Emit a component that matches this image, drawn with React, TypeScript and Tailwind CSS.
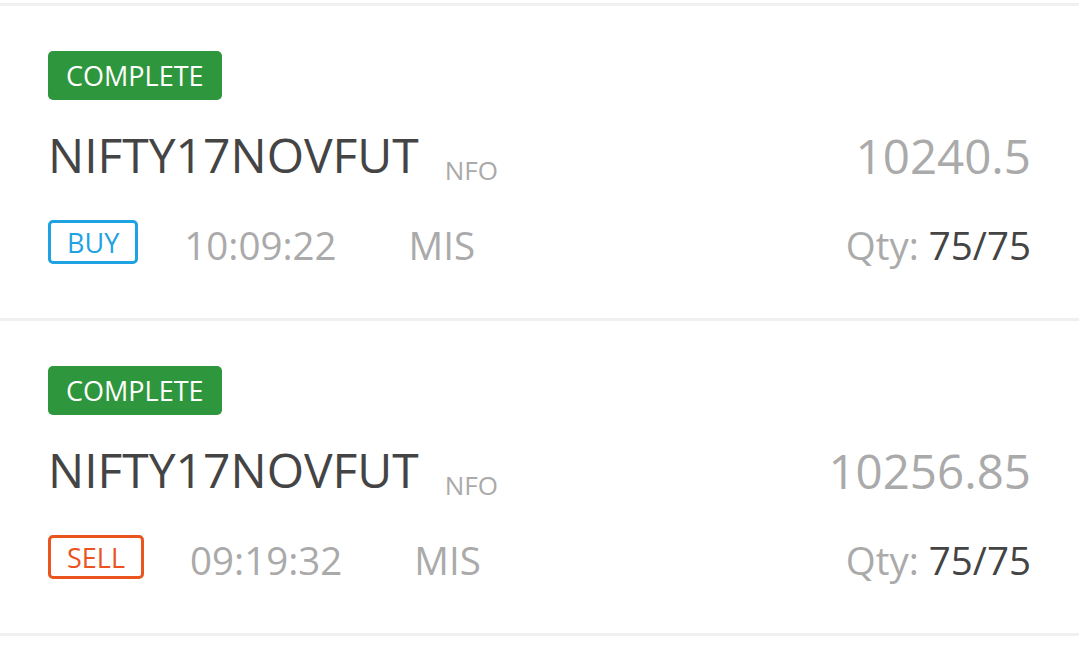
type Order = {
  id: number;
  symbol: string;
  exchange: string;
  price: string;
  side: "BUY" | "SELL";
  time: string;
  product: string;
  qty: string;
};

const orders: Order[] = [
  {
    id: 1,
    symbol: "NIFTY17NOVFUT",
    exchange: "NFO",
    price: "10240.5",
    side: "BUY",
    time: "10:09:22",
    product: "MIS",
    qty: "75/75",
  },
  {
    id: 2,
    symbol: "NIFTY17NOVFUT",
    exchange: "NFO",
    price: "10256.85",
    side: "SELL",
    time: "09:19:32",
    product: "MIS",
    qty: "75/75",
  },
];

function OrderRow({ order }: { order: Order }) {
  const sideClass =
    order.side === "BUY"
      ? "border-[#1fa2e2] text-[#1fa2e2]"
      : "border-[#e9541f] text-[#e9541f]";

  return (
    <div className="border-t-[3px] border-[#f0f0f0] px-[48px] pt-[45px] pb-[54px]">
      <div className="flex">
        <span className="flex h-[49px] items-center rounded-[5px] bg-[#2e963c] px-[18px] pt-[2px] text-[27px] text-white">
          COMPLETE
        </span>
      </div>
      <div className="mt-[19px] flex items-end justify-between">
        <div className="flex items-end">
          <span className="text-[48px] text-[#444444]">{order.symbol}</span>
          <span className="mb-[1px] ml-[26px] text-[26px] text-[#aaaaaa]">{order.exchange}</span>
        </div>
        <span className="text-[47.5px] text-[#aaaaaa]">{order.price}</span>
      </div>
      <div className="mt-[29px] flex h-[44px] items-center justify-between">
        <div className="flex items-center">
          <span
            className={`flex h-[44px] items-center rounded-[5px] border-[3px] px-[16px] pt-[3px] text-[27px] ${sideClass}`}
          >
            {order.side}
          </span>
          <span className="ml-[46px] pt-[7px] text-[38.5px] text-[#aaaaaa]">{order.time}</span>
          <span className="ml-[72px] pt-[7px] text-[38.5px] text-[#aaaaaa]">{order.product}</span>
        </div>
        <span className="pt-[7px] text-[38.5px] text-[#aaaaaa]">
          Qty: <span className="text-[#444444]">{order.qty}</span>
        </span>
      </div>
    </div>
  );
}

export default function App() {
  return (
    <div
      className="min-h-screen bg-white pt-[3px]"
      style={{ fontFamily: '"Open Sans", sans-serif' }}
    >
      {orders.map((order) => (
        <OrderRow key={order.id} order={order} />
      ))}
      <div className="border-t-[3px] border-[#f0f0f0]" />
    </div>
  );
}
